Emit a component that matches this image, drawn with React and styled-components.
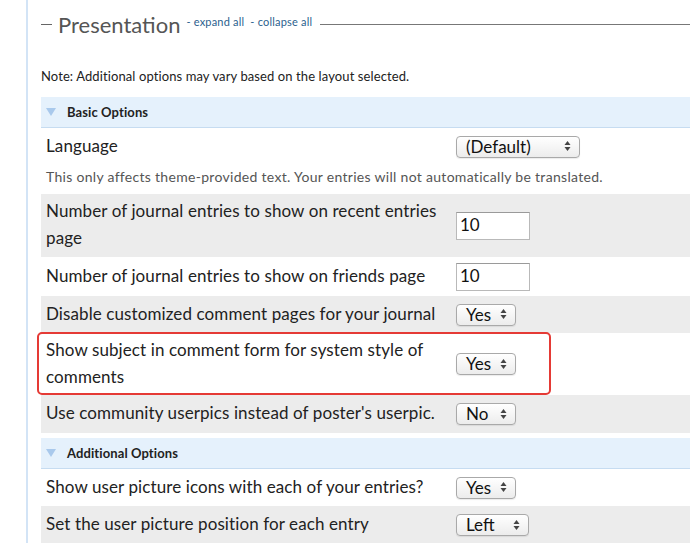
import React from 'react';
import styled, { createGlobalStyle } from 'styled-components';

const Global = createGlobalStyle`
    body {
        margin: 0;
        background: #fff;
        font-family: Lato, "Open Sans", Arial, sans-serif;
        color: #222;
    }`;

const Page = styled.div`
    margin-left: 26px;
    border-left: 2px solid #d3e4f6;
    padding-left: 13px;
    height: 543px;
    overflow: hidden;`;

const Legend = styled.div`
    display: flex;
    align-items: center;
    height: 48px;`;

const Dash = styled.span`
    width: 11px;
    height: 1px;
    background: #666;
    margin-right: 6px;`;

const Title = styled.h2`
    margin: 0 6px 0 0;
    font-size: 22px;
    font-weight: 400;
    color: #555;`;

const Link = styled.a`
    font-size: 11px;
    letter-spacing: 0.2px;
    color: #2b5f8e;
    text-decoration: none;
    margin-right: 6px;
    position: relative;
    top: -3px;`;

const Rule = styled.span`
    flex: 1;
    height: 1px;
    background: #777;
    margin-left: 2px;`;

const Note = styled.p`
    margin: 20px 0 13px;
    font-size: 13px;
    letter-spacing: 0.1px;
    line-height: 16px;`;

const SectionHead = styled.div`
    display: flex;
    align-items: center;
    height: 30px;
    margin-top: ${p => p.$gap || 0}px;
    background: #e5f1fc;
    border-bottom: 1px solid #c6dcf1;
    font-size: 13px;
    font-weight: 700;
    letter-spacing: 0.1px;
    color: #222;`;

const Arrow = styled.svg`
    margin: 0 11px 0 5px;`;

const Row = styled.div`
    position: relative;
    display: flex;
    align-items: center;
    min-height: ${p => p.$h}px;
    padding-left: 5px;
    background: ${p => (p.$alt ? '#ececec' : '#fff')};`;

const Label = styled.div`
    width: 410px;
    font-size: 17px;
    letter-spacing: 0.1px;
    line-height: 27px;
    padding: 0 10px 3px 0;
    box-sizing: border-box;`;

const Desc = styled.div`
    padding: 2px 0 7px 5px;
    font-size: 14px;
    letter-spacing: 0.3px;
    line-height: 20px;
    color: #555;`;

const SelectBox = styled.div`
    display: flex;
    align-items: center;
    justify-content: space-between;
    width: ${p => p.$w}px;
    height: 22px;
    box-sizing: border-box;
    padding: 0 8px 1px 9px;
    border: 1px solid #a9a9a9;
    border-radius: 4px;
    background: linear-gradient(#ffffff, #ececec);
    box-shadow: 0 1px 1px rgba(0, 0, 0, 0.08);
    font-size: 17px;
    color: #111;`;

const TextBox = styled.div`
    width: 74px;
    height: 28px;
    box-sizing: border-box;
    padding: 0 3px 2px;
    border: 1px solid #b9b9b9;
    border-top-color: #9a9a9a;
    background: #fff;
    font-size: 17px;
    line-height: 24px;
    color: #111;`;

const Highlight = styled.div`
    position: absolute;
    left: -4px;
    top: -1px;
    width: 514px;
    bottom: 0;
    border: 2px solid #e53a35;
    border-radius: 5px;
    box-sizing: border-box;
    pointer-events: none;`;

function Select({ value, width }) {
    return (
        <SelectBox $w={width}>
            <span>{value}</span>
            <svg width="7" height="12" viewBox="0 0 7 12">
                <path d="M3.5 1 L6.5 5 L0.5 5 Z M3.5 11 L6.5 7 L0.5 7 Z" fill="#444" />
            </svg>
        </SelectBox>
    );
}

function Section({ title, gap }) {
    return (
        <SectionHead $gap={gap}>
            <Arrow width="10" height="8" viewBox="0 0 10 8">
                <path d="M0 0 L10 0 L5 8 Z" fill="#a9c9ec" />
            </Arrow>
            {title}
        </SectionHead>
    );
}

export default function App() {
    return (
        <Page>
            <Global />
            <Legend>
                <Dash />
                <Title>Presentation</Title>
                <Link href="#">- expand all</Link>
                <Link href="#">- collapse all</Link>
                <Rule />
            </Legend>
            <Note>Note: Additional options may vary based on the layout selected.</Note>

            <Section title="Basic Options" />
            <Row $h={37}>
                <Label>Language</Label>
                <Select value="(Default)" width={124} />
            </Row>
            <Desc>This only affects theme-provided text. Your entries will not automatically be translated.</Desc>
            <Row $alt $h={63}>
                <Label>Number of journal entries to show on recent entries page</Label>
                <TextBox>10</TextBox>
            </Row>
            <Row $h={39}>
                <Label>Number of journal entries to show on friends page</Label>
                <TextBox>10</TextBox>
            </Row>
            <Row $alt $h={37}>
                <Label>Disable customized comment pages for your journal</Label>
                <Select value="Yes" width={60} />
            </Row>
            <Row $h={62}>
                <Label>Show subject in comment form for system style of comments</Label>
                <Select value="Yes" width={60} />
                <Highlight />
            </Row>
            <Row $alt $h={38}>
                <Label>Use community userpics instead of poster's userpic.</Label>
                <Select value="No" width={60} />
            </Row>

            <Section title="Additional Options" gap={5} />
            <Row $h={37}>
                <Label>Show user picture icons with each of your entries?</Label>
                <Select value="Yes" width={60} />
            </Row>
            <Row $alt $h={38}>
                <Label>Set the user picture position for each entry</Label>
                <Select value="Left" width={73} />
            </Row>
        </Page>
    );
}
